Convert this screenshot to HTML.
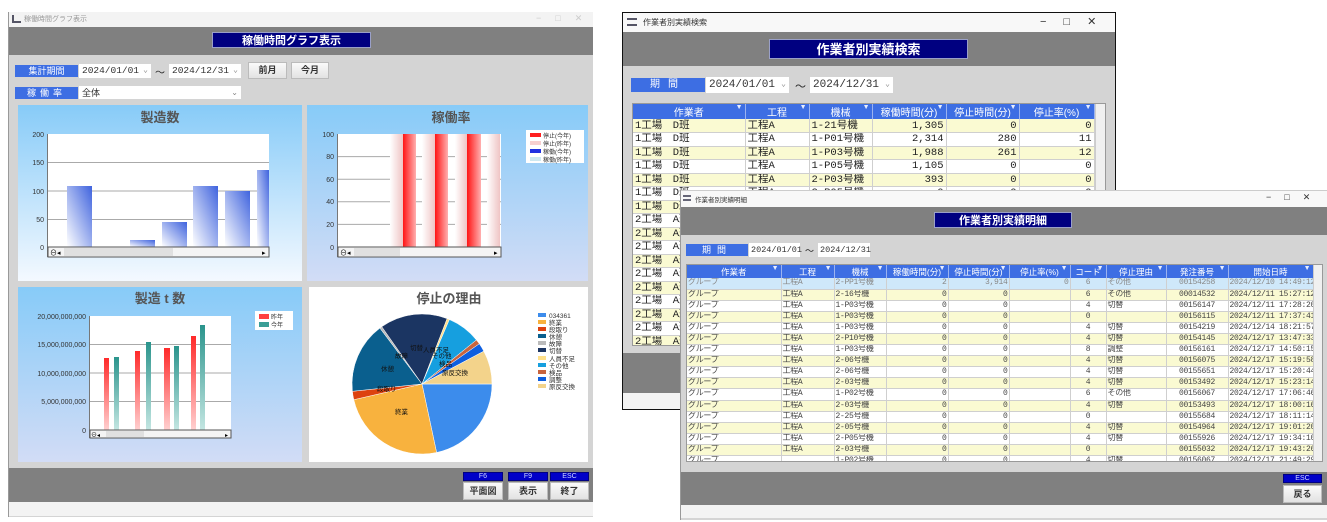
<!DOCTYPE html>
<html><head><meta charset="utf-8">
<style>
*{margin:0;padding:0;box-sizing:border-box}
body{width:1327px;height:522px;background:#fff;position:relative;overflow:hidden;font-family:"Liberation Sans","Noto Sans CJK JP",sans-serif;font-size:10px;color:#222}
.a{position:absolute}
.tb{background:#f3f3f3}
.hd{background:#808080}
.bg{background:#d4d4d4}
.ttl{background:#000080;color:#fff;border:1px solid #9aa0c8;font-weight:bold;text-align:center;font-family:"Noto Sans CJK JP",sans-serif}
.lbl{background:#3d6ee3;color:#fff;text-align:center;font-size:9px;line-height:12px}
.cb{background:#fff;font-family:"Liberation Mono","Noto Sans CJK JP",monospace;font-size:9.5px;line-height:14px;padding-left:3px;color:#333}
.cb i{position:absolute;right:3px;top:0;font-style:normal;color:#888;font-size:8px}
.btn{background:linear-gradient(#fafafa,#e2e2e2);border:1px solid #bbb;text-align:center;font-size:9px;font-weight:bold;color:#333}
.fk{background:#0000c8;border:1px solid #000080;color:#cfd8ff;font-size:7px;text-align:center;line-height:8px}
table{border-collapse:collapse;table-layout:fixed}
td{white-space:nowrap;overflow:hidden;border-right:1px solid #cfcfcf;border-bottom:1px solid #cfcfcf;padding:0 2px}
.t2 td{height:13.5px;font-size:10.5px;line-height:12px;font-family:"Liberation Mono","Noto Sans CJK JP",monospace;color:#222}
.t3 td{height:11.1px;font-size:8px;letter-spacing:-0.3px;line-height:10px;font-family:"Liberation Mono","Noto Sans CJK JP",monospace;color:#444;padding:0 1px}
th{background:#3d6ee3;color:#fff;font-weight:normal;border-right:1px solid #9bb3f0;position:relative;white-space:nowrap;overflow:hidden}
th:after{content:"▼";position:absolute;right:2px;top:0;font-size:7px;color:#e8eeff}
.t2 th{height:15px;font-size:10px}
.t3 th{height:13px;font-size:8.5px}
tr.y td{background:#fafad2}
tr.w td{background:#fff}
tr.s td{background:#cfe8fa;color:#888}
.r{text-align:right}
.c{text-align:center}
</style></head><body>

<!-- WINDOW 1 -->
<div class="a bg" style="left:8px;top:12px;width:585px;height:505px;border-left:1px solid #999"></div>
<div class="a tb" style="left:9px;top:12px;width:584px;height:15px"></div>
<div class="a" style="left:12px;top:15px;width:9px;height:8px;border-left:2px solid #556;border-bottom:2px solid #556"></div>
<div class="a" style="left:24px;top:14px;font-size:7px;color:#999">稼働時間グラフ表示</div>
<div class="a" style="left:536px;top:13px;font-size:9px;color:#ccc;letter-spacing:14px">−□✕</div>
<div class="a hd" style="left:9px;top:27px;width:584px;height:28px"></div>
<div class="a ttl" style="left:212px;top:32px;width:159px;height:16px;font-size:11px;line-height:14px">稼働時間グラフ表示</div>
<div class="a lbl" style="left:15px;top:65px;width:63px;height:12px">集計期間</div>
<div class="a cb" style="left:79px;top:64px;width:72px;height:14px">2024/01/01<i>⌄</i></div>
<div class="a" style="left:155px;top:64px;font-size:10px">～</div>
<div class="a cb" style="left:169px;top:64px;width:72px;height:14px">2024/12/31<i>⌄</i></div>
<div class="a btn" style="left:248px;top:62px;width:39px;height:17px;line-height:15px">前月</div>
<div class="a btn" style="left:291px;top:62px;width:38px;height:17px;line-height:15px">今月</div>
<div class="a lbl" style="left:15px;top:87px;width:63px;height:12px;letter-spacing:4px">稼働率</div>
<div class="a cb" style="left:79px;top:86px;width:162px;height:13px;line-height:13px;font-family:'Noto Sans CJK JP',sans-serif;font-size:9px">全体<i>⌄</i></div>

<svg class="a" style="left:0;top:0" width="600" height="522" viewBox="0 0 600 522" font-family="Liberation Sans, Noto Sans CJK JP, sans-serif">
<defs>
<linearGradient id="g1" x1="0" y1="0" x2="0" y2="1"><stop offset="0" stop-color="#87cbf8"/><stop offset="1" stop-color="#f4f9ff"/></linearGradient>
<linearGradient id="g2" x1="0" y1="0" x2="0" y2="1"><stop offset="0" stop-color="#87cbf8"/><stop offset="1" stop-color="#d2dcf6"/></linearGradient>
<linearGradient id="gb" x1="0" y1="1" x2="1" y2="0"><stop offset="0" stop-color="#fff"/><stop offset="1" stop-color="#3f63de"/></linearGradient>
<linearGradient id="gr" x1="0" y1="0" x2="1" y2="0"><stop offset="0" stop-color="#ff1414"/><stop offset="1" stop-color="#ffb0b0"/></linearGradient>
<linearGradient id="gp" x1="0" y1="0" x2="1" y2="0"><stop offset="0" stop-color="#fff"/><stop offset="1" stop-color="#efc4c4"/></linearGradient>
<linearGradient id="grv" x1="0" y1="0" x2="0" y2="1"><stop offset="0" stop-color="#ff2a2a"/><stop offset="1" stop-color="#ffd0d0"/></linearGradient>
<linearGradient id="gtv" x1="0" y1="0" x2="0" y2="1"><stop offset="0" stop-color="#2a948c"/><stop offset="1" stop-color="#c4e6e2"/></linearGradient>
</defs>
<rect x="18" y="105" width="284" height="176" fill="url(#g1)"/>
<text x="160" y="122" font-size="13" font-weight="bold" fill="#555" text-anchor="middle">製造数</text>
<rect x="48" y="134" width="221" height="113" fill="#fff"/>
<g stroke="#aaa" stroke-width="1"><line x1="48" y1="162.5" x2="269" y2="162.5"/><line x1="48" y1="191" x2="269" y2="191"/><line x1="48" y1="219.5" x2="269" y2="219.5"/></g>
<line x1="47.5" y1="134" x2="47.5" y2="257" stroke="#777"/>
<g font-size="7" fill="#333" text-anchor="end"><text x="44" y="137">200</text><text x="44" y="165">150</text><text x="44" y="194">100</text><text x="44" y="222">50</text><text x="44" y="250">0</text></g>
<g fill="url(#gb)"><rect x="67" y="186" width="25" height="61"/><rect x="130" y="240" width="25" height="7"/><rect x="162" y="222" width="25" height="25"/><rect x="193" y="186" width="25" height="61"/><rect x="225" y="191" width="25" height="56"/><rect x="257" y="170" width="12" height="77"/></g>
<rect x="48" y="247" width="221" height="10" fill="#f4f4f4" stroke="#555"/><rect x="64" y="248" width="109" height="8" fill="#e0e0e0"/>
<text x="50" y="255" font-size="7">⊖◂</text><text x="262" y="255" font-size="7">▸</text>
<rect x="307" y="105" width="281" height="176" fill="url(#g2)"/>
<text x="451" y="122" font-size="13" font-weight="bold" fill="#555" text-anchor="middle">稼働率</text>
<rect x="338" y="134" width="163" height="113" fill="#fff"/>
<g stroke="#aaa"><line x1="338" y1="156.6" x2="501" y2="156.6"/><line x1="338" y1="179.2" x2="501" y2="179.2"/><line x1="338" y1="201.8" x2="501" y2="201.8"/><line x1="338" y1="224.4" x2="501" y2="224.4"/></g>
<line x1="337.5" y1="134" x2="337.5" y2="257" stroke="#777"/>
<g font-size="7" fill="#333" text-anchor="end"><text x="334" y="137">100</text><text x="334" y="159">80</text><text x="334" y="182">60</text><text x="334" y="204">40</text><text x="334" y="227">20</text><text x="334" y="250">0</text></g>
<g><rect x="390" y="134" width="13" height="113" fill="url(#gp)"/><rect x="403" y="134" width="13" height="113" fill="url(#gr)"/><rect x="422" y="134" width="13" height="113" fill="url(#gp)"/><rect x="435" y="134" width="13" height="113" fill="url(#gr)"/><rect x="455" y="134" width="12" height="113" fill="url(#gp)"/><rect x="467" y="134" width="14" height="113" fill="url(#gr)"/><rect x="487" y="134" width="13" height="113" fill="url(#gp)"/></g>
<rect x="338" y="247" width="163" height="10" fill="#f4f4f4" stroke="#555"/><rect x="354" y="248" width="46" height="8" fill="#e0e0e0"/>
<text x="340" y="255" font-size="7">⊖◂</text><text x="494" y="255" font-size="7">▸</text>
<rect x="526" y="130" width="58" height="33" fill="#fff"/>
<rect x="530" y="133" width="11" height="4" fill="#ff2020"/><rect x="530" y="141" width="11" height="4" fill="#f7d0d0"/><rect x="530" y="149" width="11" height="4" fill="#2030e0"/><rect x="530" y="157" width="11" height="4" fill="#cde8f0"/>
<g font-size="6" fill="#333"><text x="543" y="138">停止(今年)</text><text x="543" y="146">停止(昨年)</text><text x="543" y="154">稼働(今年)</text><text x="543" y="162">稼働(昨年)</text></g>
<rect x="18" y="287" width="284" height="175" fill="url(#g2)"/>
<text x="160" y="303" font-size="13" font-weight="bold" fill="#555" text-anchor="middle">製造 t 数</text>
<rect x="90" y="316" width="141" height="114" fill="#fff"/>
<g stroke="#aaa"><line x1="90" y1="344.5" x2="231" y2="344.5"/><line x1="90" y1="373" x2="231" y2="373"/><line x1="90" y1="401.5" x2="231" y2="401.5"/></g>
<line x1="89.5" y1="316" x2="89.5" y2="438" stroke="#777"/>
<g font-size="7" fill="#333" text-anchor="end"><text x="86" y="319">20,000,000,000</text><text x="86" y="347">15,000,000,000</text><text x="86" y="376">10,000,000,000</text><text x="86" y="404">5,000,000,000</text><text x="86" y="433">0</text></g>
<g><rect x="104" y="358" width="5" height="72" fill="url(#grv)"/><rect x="114" y="357" width="5" height="73" fill="url(#gtv)"/><rect x="135" y="351" width="5" height="79" fill="url(#grv)"/><rect x="146" y="342" width="5" height="88" fill="url(#gtv)"/><rect x="164" y="348" width="6" height="82" fill="url(#grv)"/><rect x="174" y="346" width="5" height="84" fill="url(#gtv)"/><rect x="191" y="336" width="5" height="94" fill="url(#grv)"/><rect x="200" y="325" width="5" height="105" fill="url(#gtv)"/></g>
<rect x="90" y="430" width="141" height="8" fill="#f4f4f4" stroke="#555"/><rect x="106" y="431" width="38" height="6" fill="#e0e0e0"/>
<text x="91" y="437" font-size="6">⊖◂</text><text x="225" y="437" font-size="6">▸</text>
<rect x="255" y="311" width="38" height="19" fill="#fff"/>
<rect x="259" y="314" width="10" height="5" fill="#ff4040"/><rect x="259" y="322" width="10" height="5" fill="#3a9e96"/>
<g font-size="6" fill="#333"><text x="271" y="319">昨年</text><text x="271" y="327">今年</text></g>
<rect x="309" y="287" width="279" height="175" fill="#fff"/>
<text x="449" y="303" font-size="13" font-weight="bold" fill="#555" text-anchor="middle">停止の理由</text>
<g stroke="#fff" stroke-width="0.5">
<path d="M422 384 L492 384 A70 70 0 0 1 436.6 452.5Z" fill="#3c8cec"/>
<path d="M422 384 L436.6 452.5 A70 70 0 0 1 353.8 399.7Z" fill="#f8b23e"/>
<path d="M422 384 L353.8 399.7 A70 70 0 0 1 352.4 391.3Z" fill="#dd420f"/>
<path d="M422 384 L352.4 391.3 A70 70 0 0 1 379.9 328.1Z" fill="#0a5f8e"/>
<path d="M422 384 L379.9 328.1 A70 70 0 0 1 381.8 326.7Z" fill="#bbbbbb"/>
<path d="M422 384 L381.8 326.7 A70 70 0 0 1 447.1 318.6Z" fill="#1b3562"/>
<path d="M422 384 L447.1 318.6 A70 70 0 0 1 449.4 319.5Z" fill="#ffe08a"/>
<path d="M422 384 L449.4 319.5 A70 70 0 0 1 476.4 340Z" fill="#169fdf"/>
<path d="M422 384 L476.4 340 A70 70 0 0 1 479.3 343.8Z" fill="#c8643e"/>
<path d="M422 384 L479.3 343.8 A70 70 0 0 1 483.8 351.2Z" fill="#0e5fe0"/>
<path d="M422 384 L483.8 351.2 A70 70 0 0 1 492 384Z" fill="#f3d38b"/>
</g>
<g font-size="6.5" fill="#111"><text x="395" y="414">終業</text><text x="381" y="371">休憩</text><text x="377" y="391">段取り</text><text x="395" y="358">故障</text><text x="410" y="350">切替</text><text x="423" y="352">人員不足</text><text x="432" y="358">その他</text><text x="439" y="366">検品</text><text x="442" y="375">原反交換</text></g>
<g font-size="6.5" fill="#333">
<rect x="538" y="313" width="8" height="4" fill="#3c8cec"/><text x="549" y="318">034361</text>
<rect x="538" y="320" width="8" height="4" fill="#f8b23e"/><text x="549" y="325">終業</text>
<rect x="538" y="327" width="8" height="4" fill="#dd420f"/><text x="549" y="332">段取り</text>
<rect x="538" y="334" width="8" height="4" fill="#0a5f8e"/><text x="549" y="339">休憩</text>
<rect x="538" y="341" width="8" height="4" fill="#bbbbbb"/><text x="549" y="346">故障</text>
<rect x="538" y="348" width="8" height="4" fill="#1b3562"/><text x="549" y="353">切替</text>
<rect x="538" y="356" width="8" height="4" fill="#ffe08a"/><text x="549" y="361">人員不足</text>
<rect x="538" y="363" width="8" height="4" fill="#169fdf"/><text x="549" y="368">その他</text>
<rect x="538" y="370" width="8" height="4" fill="#c8643e"/><text x="549" y="375">検品</text>
<rect x="538" y="377" width="8" height="4" fill="#0e5fe0"/><text x="549" y="382">調整</text>
<rect x="538" y="384" width="8" height="4" fill="#f3d38b"/><text x="549" y="389">原反交換</text>
</g>
</svg>

<div class="a hd" style="left:9px;top:468px;width:584px;height:34px"></div>
<div class="a tb" style="left:9px;top:502px;width:584px;height:14px"></div>
<div class="a fk" style="left:463px;top:472px;width:40px;height:9px">F6</div>
<div class="a btn" style="left:463px;top:482px;width:40px;height:18px;line-height:16px">平面図</div>
<div class="a fk" style="left:508px;top:472px;width:40px;height:9px">F9</div>
<div class="a btn" style="left:508px;top:482px;width:40px;height:18px;line-height:16px">表示</div>
<div class="a fk" style="left:550px;top:472px;width:39px;height:9px">ESC</div>
<div class="a btn" style="left:550px;top:482px;width:39px;height:18px;line-height:16px">終了</div>

<!-- WINDOW 2 -->
<div class="a bg" style="left:622px;top:12px;width:494px;height:398px;border:1px solid #111"></div>
<div class="a tb" style="left:623px;top:13px;width:492px;height:19px;background:#f8f8f8"></div>
<div class="a" style="left:627px;top:18px;width:10px;height:8px;border-top:2px solid #556;border-bottom:2px solid #556"></div>
<div class="a" style="left:643px;top:17px;font-size:8px;color:#333">作業者別実績検索</div>
<div class="a" style="left:1040px;top:15px;font-size:11px;color:#333;letter-spacing:17px">−□✕</div>
<div class="a hd" style="left:623px;top:32px;width:492px;height:34px"></div>
<div class="a ttl" style="left:769px;top:39px;width:199px;height:20px;font-size:13px;line-height:18px">作業者別実績検索</div>
<div class="a lbl" style="left:631px;top:78px;width:74px;height:14px;line-height:14px;font-size:10px;letter-spacing:8px">期間</div>
<div class="a cb" style="left:706px;top:77px;width:83px;height:16px;line-height:16px;font-size:11px">2024/01/01<i>⌄</i></div>
<div class="a" style="left:795px;top:78px;font-size:11px">～</div>
<div class="a cb" style="left:810px;top:77px;width:83px;height:16px;line-height:16px;font-size:11px">2024/12/31<i>⌄</i></div>
<div class="a" style="left:632px;top:103px;width:474px;height:243px;background:#fff;border:1px solid #999;overflow:hidden">
<table class="t2" style="width:461px">
<colgroup><col style="width:112px"><col style="width:64px"><col style="width:63px"><col style="width:74px"><col style="width:73px"><col style="width:75px"></colgroup>
<tr><th>作業者</th><th>工程</th><th>機械</th><th>稼働時間(分)</th><th>停止時間(分)</th><th>停止率(%)</th></tr>
<tr class="y"><td>1工場　D班</td><td>工程A</td><td>1-21号機</td><td class="r">1,305</td><td class="r">0</td><td class="r">0</td></tr>
<tr class="w"><td>1工場　D班</td><td>工程A</td><td>1-P01号機</td><td class="r">2,314</td><td class="r">280</td><td class="r">11</td></tr>
<tr class="y"><td>1工場　D班</td><td>工程A</td><td>1-P03号機</td><td class="r">1,988</td><td class="r">261</td><td class="r">12</td></tr>
<tr class="w"><td>1工場　D班</td><td>工程A</td><td>1-P05号機</td><td class="r">1,105</td><td class="r">0</td><td class="r">0</td></tr>
<tr class="y"><td>1工場　D班</td><td>工程A</td><td>2-P03号機</td><td class="r">393</td><td class="r">0</td><td class="r">0</td></tr>
<tr class="w"><td>1工場　D班</td><td>工程A</td><td>2-P05号機</td><td class="r">0</td><td class="r">0</td><td class="r">0</td></tr>
<tr class="y"><td>1工場　D班</td><td>工程A</td><td>2-P10号機</td><td class="r">0</td><td class="r">0</td><td class="r">0</td></tr>
<tr class="w"><td>2工場　A班</td><td>工程A</td><td>2-03号機</td><td class="r">0</td><td class="r">0</td><td class="r">0</td></tr>
<tr class="y"><td>2工場　A班</td><td>工程A</td><td>2-05号機</td><td class="r">0</td><td class="r">0</td><td class="r">0</td></tr>
<tr class="w"><td>2工場　A班</td><td>工程A</td><td>2-06号機</td><td class="r">0</td><td class="r">0</td><td class="r">0</td></tr>
<tr class="y"><td>2工場　A班</td><td>工程A</td><td>2-16号機</td><td class="r">0</td><td class="r">0</td><td class="r">0</td></tr>
<tr class="w"><td>2工場　A班</td><td>工程A</td><td>2-25号機</td><td class="r">0</td><td class="r">0</td><td class="r">0</td></tr>
<tr class="y"><td>2工場　A班</td><td>工程A</td><td>1-P02号機</td><td class="r">0</td><td class="r">0</td><td class="r">0</td></tr>
<tr class="w"><td>2工場　A班</td><td>工程A</td><td>1-P03号機</td><td class="r">0</td><td class="r">0</td><td class="r">0</td></tr>
<tr class="y"><td>2工場　A班</td><td>工程A</td><td>2-P10号機</td><td class="r">0</td><td class="r">0</td><td class="r">0</td></tr>
<tr class="w"><td>2工場　A班</td><td>工程A</td><td>2-PP1号機</td><td class="r">0</td><td class="r">0</td><td class="r">0</td></tr>
<tr class="y"><td>2工場　A班</td><td>工程A</td><td>2-03号機</td><td class="r">0</td><td class="r">0</td><td class="r">0</td></tr>
</table>
<div class="a" style="left:462px;top:0;width:11px;height:241px;background:#f0f0f0;border-left:1px solid #ccc"></div>
</div>
<div class="a hd" style="left:623px;top:353px;width:492px;height:40px"></div>
<div class="a tb" style="left:623px;top:393px;width:492px;height:16px"></div>

<!-- WINDOW 3 -->
<div class="a bg" style="left:680px;top:190px;width:647px;height:330px;border-left:1px solid #999"></div>
<div class="a" style="left:681px;top:190px;width:646px;height:17px;background:#f8f8f8;border-top:1px solid #ccc"></div>
<div class="a" style="left:683px;top:195px;width:8px;height:6px;border-top:2px solid #667;border-bottom:2px solid #667"></div>
<div class="a" style="left:695px;top:194px;font-size:6.5px;color:#333">作業者別実績明細</div>
<div class="a" style="left:1266px;top:192px;font-size:9px;color:#333;letter-spacing:13px">−□✕</div>
<div class="a hd" style="left:681px;top:207px;width:646px;height:28px"></div>
<div class="a ttl" style="left:934px;top:212px;width:138px;height:16px;font-size:11px;line-height:14px">作業者別実績明細</div>
<div class="a lbl" style="left:686px;top:244px;width:62px;height:12px;letter-spacing:6px">期間</div>
<div class="a cb" style="left:749px;top:243px;width:51px;height:14px;font-size:8.5px;padding-left:2px">2024/01/01</div>
<div class="a" style="left:805px;top:244px;font-size:9px">～</div>
<div class="a cb" style="left:818px;top:243px;width:52px;height:14px;font-size:8.5px;padding-left:2px">2024/12/31</div>
<div class="a" style="left:686px;top:264px;width:637px;height:198px;background:#fff;border:1px solid #999;overflow:hidden">
<table class="t3" style="width:626px">
<colgroup><col style="width:94px"><col style="width:53px"><col style="width:52px"><col style="width:62px"><col style="width:61px"><col style="width:61px"><col style="width:36px"><col style="width:60px"><col style="width:62px"><col style="width:85px"></colgroup>
<tr><th>作業者</th><th>工程</th><th>機械</th><th>稼働時間(分)</th><th>停止時間(分)</th><th>停止率(%)</th><th>コード</th><th>停止理由</th><th>発注番号</th><th>開始日時</th></tr>
<tr class="s"><td>グループ</td><td>工程A</td><td>2-PP1号機</td><td class="r">2</td><td class="r">3,914</td><td class="r">0</td><td class="c">6</td><td>その他</td><td class="c">00154258</td><td>2024/12/10 14:49:12</td></tr>
<tr class="y"><td>グループ</td><td>工程A</td><td>2-16号機</td><td class="r">0</td><td class="r">0</td><td></td><td class="c">6</td><td>その他</td><td class="c">00014532</td><td>2024/12/11 15:27:12</td></tr>
<tr class="w"><td>グループ</td><td>工程A</td><td>1-P03号機</td><td class="r">0</td><td class="r">0</td><td></td><td class="c">4</td><td>切替</td><td class="c">00156147</td><td>2024/12/11 17:28:20</td></tr>
<tr class="y"><td>グループ</td><td>工程A</td><td>1-P03号機</td><td class="r">0</td><td class="r">0</td><td></td><td class="c">0</td><td></td><td class="c">00156115</td><td>2024/12/11 17:37:41</td></tr>
<tr class="w"><td>グループ</td><td>工程A</td><td>1-P03号機</td><td class="r">0</td><td class="r">0</td><td></td><td class="c">4</td><td>切替</td><td class="c">00154219</td><td>2024/12/14 18:21:57</td></tr>
<tr class="y"><td>グループ</td><td>工程A</td><td>2-P10号機</td><td class="r">0</td><td class="r">0</td><td></td><td class="c">4</td><td>切替</td><td class="c">00154145</td><td>2024/12/17 13:47:33</td></tr>
<tr class="w"><td>グループ</td><td>工程A</td><td>1-P03号機</td><td class="r">0</td><td class="r">0</td><td></td><td class="c">8</td><td>調整</td><td class="c">00156161</td><td>2024/12/17 14:50:15</td></tr>
<tr class="y"><td>グループ</td><td>工程A</td><td>2-06号機</td><td class="r">0</td><td class="r">0</td><td></td><td class="c">4</td><td>切替</td><td class="c">00156075</td><td>2024/12/17 15:19:58</td></tr>
<tr class="w"><td>グループ</td><td>工程A</td><td>2-06号機</td><td class="r">0</td><td class="r">0</td><td></td><td class="c">4</td><td>切替</td><td class="c">00155651</td><td>2024/12/17 15:20:44</td></tr>
<tr class="y"><td>グループ</td><td>工程A</td><td>2-03号機</td><td class="r">0</td><td class="r">0</td><td></td><td class="c">4</td><td>切替</td><td class="c">00153492</td><td>2024/12/17 15:23:14</td></tr>
<tr class="w"><td>グループ</td><td>工程A</td><td>1-P02号機</td><td class="r">0</td><td class="r">0</td><td></td><td class="c">6</td><td>その他</td><td class="c">00156067</td><td>2024/12/17 17:06:46</td></tr>
<tr class="y"><td>グループ</td><td>工程A</td><td>2-03号機</td><td class="r">0</td><td class="r">0</td><td></td><td class="c">4</td><td>切替</td><td class="c">00153493</td><td>2024/12/17 18:00:16</td></tr>
<tr class="w"><td>グループ</td><td>工程A</td><td>2-25号機</td><td class="r">0</td><td class="r">0</td><td></td><td class="c">0</td><td></td><td class="c">00155684</td><td>2024/12/17 18:11:14</td></tr>
<tr class="y"><td>グループ</td><td>工程A</td><td>2-05号機</td><td class="r">0</td><td class="r">0</td><td></td><td class="c">4</td><td>切替</td><td class="c">00154964</td><td>2024/12/17 19:01:20</td></tr>
<tr class="w"><td>グループ</td><td>工程A</td><td>2-P05号機</td><td class="r">0</td><td class="r">0</td><td></td><td class="c">4</td><td>切替</td><td class="c">00155926</td><td>2024/12/17 19:34:10</td></tr>
<tr class="y"><td>グループ</td><td>工程A</td><td>2-03号機</td><td class="r">0</td><td class="r">0</td><td></td><td class="c">0</td><td></td><td class="c">00155032</td><td>2024/12/17 19:43:26</td></tr>
<tr class="w"><td>グループ</td><td></td><td>1-P02号機</td><td class="r">0</td><td class="r">0</td><td></td><td class="c">4</td><td>切替</td><td class="c">00156067</td><td>2024/12/17 21:49:29</td></tr>
</table>
<div class="a" style="left:626px;top:0;width:10px;height:196px;background:#f0f0f0;border-left:1px solid #ccc"></div>
</div>
<div class="a hd" style="left:681px;top:472px;width:646px;height:33px"></div>
<div class="a tb" style="left:681px;top:505px;width:646px;height:13px"></div>
<div class="a fk" style="left:1283px;top:474px;width:39px;height:9px">ESC</div>
<div class="a btn" style="left:1283px;top:485px;width:39px;height:18px;line-height:16px">戻る</div>
</body></html>
